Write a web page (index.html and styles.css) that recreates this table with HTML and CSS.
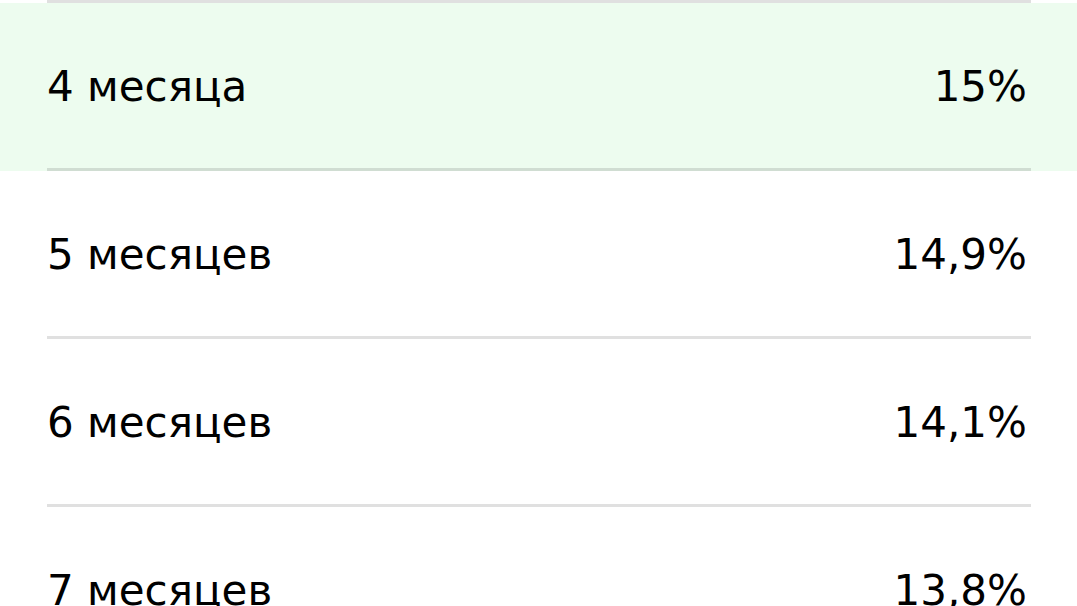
FILE: index.html
```html
<!DOCTYPE html>
<html lang="ru">
<head>
<meta charset="utf-8">
<link rel="stylesheet" href="styles.css">
</head>
<body>
<div class="rates">
  <div class="row row--active"><span class="term">4 месяца</span><span class="rate">15%</span></div>
  <div class="row"><span class="term">5 месяцев</span><span class="rate">14,9%</span></div>
  <div class="row"><span class="term">6 месяцев</span><span class="rate">14,1%</span></div>
  <div class="row"><span class="term">7 месяцев</span><span class="rate">13,8%</span></div>
</div>
</body>
</html>
```
FILE: styles.css
```css
html, body {
  margin: 0;
  padding: 0;
  background: #ffffff;
  overflow: hidden;
}
body {
  font-family: "DejaVu Sans", "Noto Sans", sans-serif;
  color: #000000;
}
.rates {
  margin: 0 46px 0 47px;
  border-top: 3px solid rgba(0, 0, 0, 0.12);
}
.row {
  display: flex;
  justify-content: space-between;
  align-items: center;
  box-sizing: border-box;
  height: 168px;
  padding: 3px 4px 0 0;
  border-bottom: 3px solid rgba(0, 0, 0, 0.12);
  font-size: 42px;
  line-height: 1;
}
.row--active {
  background: #edfcef;
  box-shadow: -47px 0 0 #edfcef, 46px 0 0 #edfcef;
}
```
